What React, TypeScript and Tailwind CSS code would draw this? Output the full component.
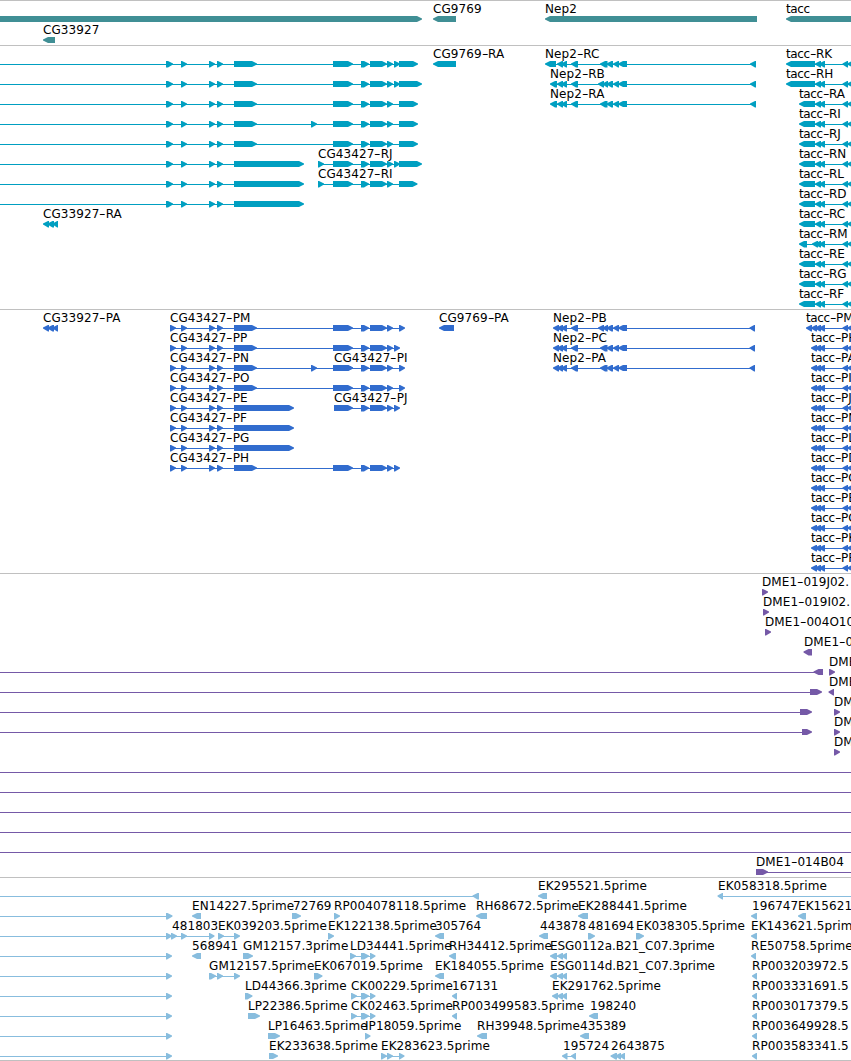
type Dir = 'left' | 'right'
type Span = [number, number]

interface Feature {
  row: number
  dir: Dir
  spans: Span[]
  label?: string
  labelX?: number
  // overrides for the connecting line when it runs past the first/last span
  from?: number
  to?: number
}

interface TrackData {
  id: string
  height: string
  rowHeight: number
  color: string
  features: Feature[]
}

const WIDTH = 851

function left(row: number, label: string, spans: Span[], extra: Partial<Feature> = {}): Feature {
  return { row, dir: 'left', label, spans, ...extra }
}

function right(row: number, label: string, spans: Span[], extra: Partial<Feature> = {}): Feature {
  return { row, dir: 'right', label, spans, ...extra }
}

const lead: Span[] = [[166, 173], [181, 187], [209, 215], [217, 223]]
const codingLead: Span[] = [[170, 176], [181, 187], [209, 215], [217, 223]]
const mid: Span[] = [[234, 257]]
const tail: Span[] = [[333, 353], [361, 369], [370, 387], [387, 393]]
const extraExon: Span = [394, 400]
const skipped: Span = [311, 317]

const nepTail: Span[] = [[600, 607.5], [606.5, 613], [613, 619], [618, 627]]
const nepTailLong: Span[] = [[598, 604], [602.5, 608], [606.5, 613], [613, 619], [618, 627]]
const nepHead: Span[] = [[557, 563], [561, 567], [571, 578]]
const taccTail: Span[] = [[815, 821], [819, 825], [842.5, 848], [847, 856]]
const taccCoding: Span[] = [[811, 817], [815, 821], [819, 825], [842.5, 848], [847, 856]]

const genes: Feature[] = [
  right(0, '', [[-10, 422]]),
  left(0, 'CG9769', [[433, 456]]),
  left(0, 'Nep2', [[545, 757]]),
  left(0, 'tacc', [[786, 860]]),
  left(1, 'CG33927', [[43, 55]]),
]

const transcripts: Feature[] = [
  right(0, '', [...lead, ...mid, ...tail, extraExon, [399, 418]], { from: 0 }),
  right(1, '', [...lead, ...mid, ...tail, extraExon, [399, 422]], { from: 0 }),
  right(2, '', [...lead, ...mid, ...tail, [399, 418]], { from: 0 }),
  right(3, '', [...lead, ...mid, skipped, ...tail, [399, 418]], { from: 0 }),
  right(4, '', [...lead, ...mid, ...tail, [399, 418]], { from: 0 }),
  right(5, '', [...lead, [234, 304]], { from: 0 }),
  right(6, '', [...lead, [234, 304]], { from: 0 }),
  right(7, '', [...lead, [234, 304]], { from: 0 }),
  right(5, 'CG43427-RJ', [[318, 324], ...tail, extraExon, [399, 422]]),
  right(6, 'CG43427-RI', [[318, 324], ...tail, [399, 417.5]]),
  left(8, 'CG33927-RA', [[43, 49], [47.5, 54], [52.5, 58]]),
  left(0, 'CG9769-RA', [[433, 456]]),
  left(0, 'Nep2-RC', [[545, 556], ...nepHead, ...nepTail, [750, 756]]),
  left(1, 'Nep2-RB', [[550, 557], ...nepHead, ...nepTailLong, [750, 756]]),
  left(2, 'Nep2-RA', [[550, 557], ...nepHead, ...nepTail, [750, 756]]),
  left(0, 'tacc-RK', [[786, 815], ...taccTail]),
  left(1, 'tacc-RH', [[786, 815], ...taccTail]),
  ...['RA', 'RI', 'RJ', 'RN', 'RL', 'RD', 'RC', 'RM', 'RE', 'RG', 'RF'].map((name, i) =>
    left(
      i + 2,
      `tacc-${name}`,
      name === 'RM' ? [[799, 807], [812, 818], ...taccTail] : [[799, 815], ...taccTail],
    ),
  ),
]

const proteins: Feature[] = [
  left(0, 'CG33927-PA', [[43, 49], [47.5, 54], [52.5, 58]]),
  right(0, 'CG43427-PM', [...codingLead, ...mid, ...tail, [399, 405]]),
  right(1, 'CG43427-PP', [...codingLead, ...mid, ...tail, extraExon]),
  right(2, 'CG43427-PN', [...codingLead, ...mid, skipped, ...tail, [399, 405]]),
  right(2, 'CG43427-PI', [[334, 353]]),
  right(3, 'CG43427-PO', [...codingLead, ...mid, ...tail, [399, 405]]),
  right(4, 'CG43427-PE', [...codingLead, [234, 294]]),
  right(4, 'CG43427-PJ', [[334, 353], ...tail.slice(1), extraExon]),
  right(5, 'CG43427-PF', [...codingLead, [234, 294]]),
  right(6, 'CG43427-PG', [...codingLead, [234, 294]]),
  right(7, 'CG43427-PH', [...codingLead, ...mid, ...tail, extraExon]),
  left(0, 'CG9769-PA', [[439, 454]]),
  left(0, 'Nep2-PB', [[553, 559], ...nepHead, ...nepTailLong, [749.5, 755]]),
  left(1, 'Nep2-PC', [[553, 559], ...nepHead, ...nepTail, [749.5, 755]]),
  left(2, 'Nep2-PA', [[553, 559], ...nepHead, ...nepTail, [749.5, 755]]),
  left(0, 'tacc-PM', [[806, 812], ...taccCoding]),
  ...['PH', 'PA', 'PI', 'PJ', 'PN', 'PL', 'PD', 'PC', 'PE', 'PG', 'PK', 'PF'].map((name, i) =>
    left(i + 1, `tacc-${name}`, taccCoding),
  ),
]

const clones: Feature[] = [
  right(0, 'DME1-019J02.', [[762, 768]]),
  right(1, 'DME1-019I02.', [[763, 769]]),
  right(2, 'DME1-004O10', [[765, 771]]),
  left(3, 'DME1-0', [[803.5, 812]]),
  left(4, '', [[813.5, 823]], { from: 0 }),
  right(4, 'DME1', [[829, 835]]),
  right(5, '', [[810, 822]], { from: 0 }),
  left(5, 'DME1', [[828.5, 834]], { labelX: 829 }),
  right(6, '', [[800, 812]], { from: 0 }),
  right(6, 'DME', [[834, 840]]),
  right(7, '', [[802, 812]], { from: 0 }),
  right(7, 'DME', [[834, 840]]),
  right(8, 'DME', [[834, 840]]),
  ...[9, 10, 11, 12, 13].map((row) => right(row, '', [], { from: 0, to: WIDTH })),
  right(14, 'DME1-014B04', [[756, 768]], { to: WIDTH }),
]

const ckSpans: Span[] = [[351, 357], [361, 369], [370, 375.5]]
const esgSpans: Span[] = [[550, 557], [557, 563], [561.5, 567]]

const ests: Feature[] = [
  left(0, '', [[472.5, 479]], { from: 0 }),
  left(0, 'EK295521.5prime', [[538, 547]]),
  left(0, 'EK058318.5prime', [[717.5, 723]], { labelX: 718, to: WIDTH }),
  right(1, '', [[166, 172.5]], { from: 0 }),
  left(1, 'EN14227.5prime', [[192, 201]]),
  right(1, '72769', [[292, 301]], { labelX: 293 }),
  right(1, 'RP004078118.5prime', [[334, 340]]),
  left(1, 'RH68672.5prime', [[476, 487]]),
  left(1, 'EK288441.5prime', [[578, 588]]),
  left(1, '196747', [[751, 757]], { labelX: 752 }),
  left(1, 'EK15621', [[798, 806]]),
  right(2, '', [[166, 172], [171, 177], [181, 187]], { from: 0, to: 209 }),
  right(2, '481803', [[209, 214.5]], { labelX: 172 }),
  right(2, 'EK039203.5prime', [[218, 224], [234, 240]]),
  right(2, 'EK122138.5prime', [[328, 334]]),
  left(2, '305764', [[435, 444]]),
  left(2, '443878', [[539, 548]], { labelX: 540 }),
  right(2, '481694', [[588, 595]]),
  right(2, 'EK038305.5prime', [[636, 644]]),
  left(2, 'EK143621.5prime', [[751, 757]]),
  right(3, '', [[166, 172]], { from: 0 }),
  left(3, '568941', [[192, 201]]),
  right(3, 'GM12157.3prime', [[243, 253]]),
  right(3, 'LD34441.5prime', [[350, 356], [361, 369], [370, 375.5]]),
  left(3, 'RH34412.5prime', [[449, 456]]),
  left(3, 'ESG0112a.B21_C07.3prime', esgSpans),
  left(3, 'RE50758.5prime', [[751, 756]]),
  right(4, '', [[166, 172]], { from: 0 }),
  right(4, 'GM12157.5prime', [[209, 216], [217, 223], [234, 240]]),
  right(4, 'EK067019.5prime', [[314, 322.5]]),
  left(4, 'EK184055.5prime', [[435, 444]]),
  left(4, 'ESG0114d.B21_C07.3prime', esgSpans),
  left(4, 'RP003203972.5', [[752, 757]]),
  right(5, '', [[166, 172]], { from: 0 }),
  right(5, 'LD44366.3prime', [[245, 252.5]]),
  right(5, 'CK00229.5prime', ckSpans),
  left(5, '167131', [[452, 457]]),
  left(5, 'EK291762.5prime', [[552, 558], ...esgSpans.slice(1)]),
  left(5, 'RP003331691.5', [[752, 757]]),
  right(6, '', [[166, 172]], { from: 0 }),
  right(6, 'LP22386.5prime', [[248, 260]]),
  right(6, 'CK02463.5prime', ckSpans),
  left(6, 'RP003499583.5prime', [[452, 457]]),
  left(6, '198240', [[589, 598]], { labelX: 590 }),
  left(6, 'RP003017379.5', [[752, 757]]),
  right(7, '', [[166, 172]], { from: 0 }),
  right(7, 'LP16463.5prime', [[268, 280]]),
  right(7, 'IP18059.5prime', [[365, 370.5]]),
  left(7, 'RH39948.5prime', [[477, 487]]),
  left(7, '435389', [[580, 589]]),
  left(7, 'RP003649928.5', [[752, 757]]),
  right(8, '', [[166, 172]], { from: 0 }),
  right(8, 'EK233638.5prime', [[269, 278]]),
  right(8, 'EK283623.5prime', [[381, 387], [387, 393], [399, 404.5]]),
  left(8, '195724', [[562, 567.5], [571, 576]], { labelX: 563 }),
  left(8, '2643875', [[610.5, 617], [615.5, 621], [619.5, 625]]),
  left(8, 'RP003583341.5', [[752, 757]]),
]

const tracks: TrackData[] = [
  { id: 'gene', height: 'h-[45px]', rowHeight: 21, color: '#408f95', features: genes },
  { id: 'transcript', height: 'h-[264px]', rowHeight: 20, color: '#009fc1', features: transcripts },
  { id: 'protein', height: 'h-[264px]', rowHeight: 20, color: '#316cce', features: proteins },
  { id: 'clone', height: 'h-[304px]', rowHeight: 20, color: '#7559a7', features: clones },
  { id: 'est', height: 'h-[183px]', rowHeight: 20, color: '#88bdde', features: ests },
]

// The head is slightly blunt so that short spans still read as solid arrows.
function arrowPoints([a, b]: Span, y: number, dir: Dir) {
  const tip = 5
  const bottom = b - a < 9 ? y + 6.4 : y + 6
  if (dir === 'right') {
    const neck = Math.max(a + 0.8, b - tip)
    return `${a},${y} ${neck},${y} ${b},${y + 2.4} ${b},${y + 3.6} ${neck},${bottom} ${a},${bottom}`
  }
  const neck = Math.min(b - 0.8, a + tip)
  return `${b},${y} ${neck},${y} ${a},${y + 2.4} ${a},${y + 3.6} ${neck},${bottom} ${b},${bottom}`
}

function Glyph({ feature, rowHeight }: { feature: Feature; rowHeight: number }) {
  const { spans, dir, row } = feature
  const y = 15 + row * rowHeight
  const from = feature.from ?? spans[0][0] + 1
  const to = feature.to ?? spans[spans.length - 1][1] - 1
  return (
    <g>
      <rect x={from} y={y + 3} width={to - from} height={1} />
      {spans.map((span, i) => (
        <polygon key={i} points={arrowPoints(span, y, dir)} />
      ))}
    </g>
  )
}

function Label({ feature, rowHeight }: { feature: Feature; rowHeight: number }) {
  const x = feature.labelX ?? Math.round(feature.spans[0][0])
  const [name, suffix] = feature.label!.split('-')
  const tight = name === 'tacc' || name.startsWith('ESG')
  return (
    <span
      className="absolute text-xs leading-[14px] whitespace-nowrap text-black"
      style={{ left: x, top: 1 + feature.row * rowHeight }}
    >
      <span className={name === 'tacc' ? 'tracking-[-0.4px]' : tight ? 'tracking-[-0.05px]' : 'tracking-[0.08px]'}>
        {name}
      </span>
      {suffix && <span className="inline-block origin-center scale-x-150 px-[1px]">-</span>}
      {suffix}
    </span>
  )
}

function Track({ track }: { track: TrackData }) {
  const { features, rowHeight, color, height } = track
  return (
    <section className={`relative shrink-0 overflow-hidden border-t border-[#c0c0c0] ${height}`}>
      <svg className="block h-full w-full" fill={color}>
        {features.map((f, i) => (
          <Glyph key={i} feature={f} rowHeight={rowHeight} />
        ))}
      </svg>
      {features.map((f, i) => f.label && <Label key={i} feature={f} rowHeight={rowHeight} />)}
    </section>
  )
}

export default function App() {
  return (
    <main className="flex h-[1061px] w-[851px] flex-col overflow-hidden border-b border-[#c0c0c0] bg-white font-['DejaVu_Sans',sans-serif]">
      {tracks.map((track) => (
        <Track key={track.id} track={track} />
      ))}
    </main>
  )
}
